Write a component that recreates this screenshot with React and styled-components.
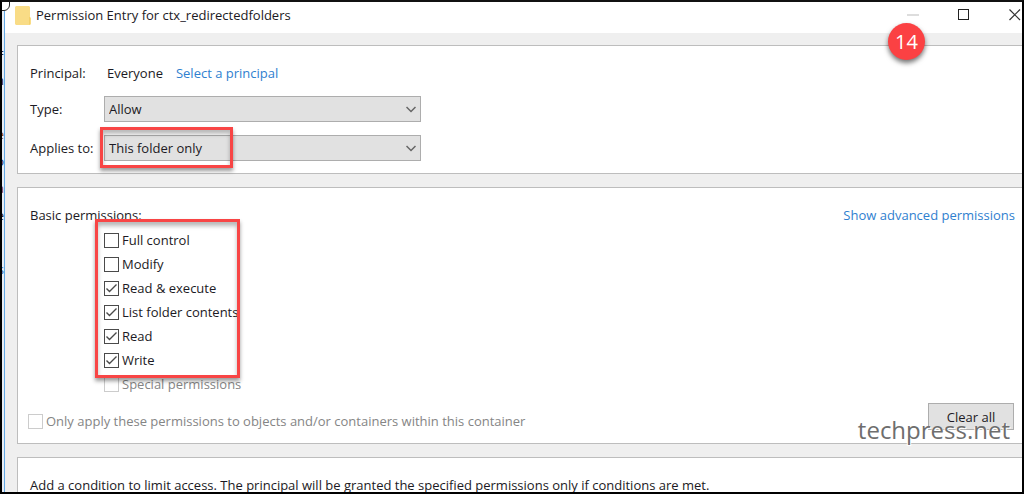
import React from 'react';
import styled, { createGlobalStyle, css } from 'styled-components';

const GlobalStyle = createGlobalStyle`
  * {
    box-sizing: border-box;
  }

  body {
    margin: 0;
    background: #fff;
    color: #1c1a24;
    font-family: 'Open Sans', 'Noto Sans', sans-serif;
    font-size: 13px;
    line-height: 20px;
  }

  input, select, button {
    margin: 0;
    color: inherit;
    font: inherit;
  }
`;

const Frame = styled.div`
  position: relative;
  display: flex;
  height: 100vh;
  overflow: hidden;
  border: 2px solid #000;
  border-top-color: #111;
`;

const CornerHandle = styled.span`
  position: absolute;
  top: -8px;
  left: -8px;
  width: 16px;
  height: 17px;
  border: 1px solid #222;
  border-radius: 6px;
  background: #fff;
`;

const Behind = styled.div`
  flex: none;
  display: flex;
  flex-direction: column;
  align-items: flex-end;
  width: 2px;
  padding-top: 38px;
  overflow: hidden;
  background: #e8eef5;
  color: #223;
  line-height: 27px;
`;

const BehindLine = styled.span`
  height: 27px;
  color: ${({ $color }) => $color};
`;

const Window = styled.div`
  flex: 1;
  min-width: 0;
  border-left: 1px solid #62a8e5;
  background: #efefef;
`;

const TitleBar = styled.header`
  display: flex;
  align-items: center;
  height: 31px;
  padding: 0 1px 5px 10px;
  background: #fff;
`;

const Title = styled.h1`
  flex: 1;
  margin: 0 0 0 5px;
  font-size: 13px;
  font-weight: 400;
`;

const WindowButtons = styled.div`
  display: flex;
  gap: 39px;
`;

const WindowButton = styled.button`
  display: flex;
  padding: 0;
  border: 0;
  background: none;
`;

const Body = styled.main`
  display: flex;
  flex-direction: column;
  gap: 13px;
  padding: 12px 0 0 12px;
`;

const Panel = styled.section`
  padding: 17px 7px 12px 12px;
  border: 1px solid #bdbdbd;
  border-right: 0;
  background: #fff;
`;

const Fields = styled.div`
  display: grid;
  grid-template-columns: 74px minmax(0, 317px);
  gap: 13px 0;
  align-items: center;
`;

const Principal = styled.div`
  display: flex;
  gap: 13px;
  padding-left: 3px;
`;

const Link = styled.a`
  color: #2f80cf;
  text-decoration: none;
  white-space: nowrap;
`;

const SelectBox = styled.div`
  position: relative;
  display: grid;
  align-items: center;

  > * {
    grid-area: 1 / 1;
  }

  > svg {
    justify-self: end;
    margin-right: 5px;
    pointer-events: none;
  }
`;

const Select = styled.select`
  appearance: none;
  width: 100%;
  height: 26px;
  padding: 0 24px 0 4px;
  border: 1px solid #adadad;
  border-radius: 0;
  background: #e1e1e1;
`;

const Highlight = styled.span`
  position: absolute;
  border: 3px solid #f84545;
  box-shadow: 0 3px 4px rgba(0, 0, 0, 0.4), inset 0 4px 4px rgba(0, 0, 0, 0.28);
  pointer-events: none;

  ${({ $around }) => $around === 'value' && css`
    top: -8px;
    left: -4px;
    width: 133px;
    height: 41px;
  `}

  ${({ $around }) => $around === 'list' && css`
    top: -9px;
    left: -9px;
    width: 145px;
    height: 159px;
  `}
`;

const PanelHead = styled.div`
  display: flex;
  justify-content: space-between;
`;

const Heading = styled.h2`
  margin: 0;
  font-size: 13px;
  font-weight: 400;
`;

const PermissionList = styled.div`
  position: relative;
  width: fit-content;
  margin: 3px 0 7px 74px;
`;

const CheckLabel = styled.label`
  display: flex;
  align-items: center;
  gap: 3px;
  height: 24px;
  color: ${({ $disabled }) => ($disabled ? '#858585' : 'inherit')};
  white-space: nowrap;
`;

const CheckBox = styled.span`
  display: grid;

  > * {
    grid-area: 1 / 1;
  }

  > svg {
    pointer-events: none;
  }
`;

const CheckInput = styled.input`
  appearance: none;
  width: 15px;
  height: 15px;
  border: 1px solid #4a4a4a;
  background: #fff;

  &:disabled {
    border-color: #ccc;
  }
`;

const PanelFoot = styled.div`
  display: flex;
  align-items: flex-start;
  justify-content: space-between;
  margin-left: -2px;

  ${CheckLabel} {
    height: 20px;
    margin-top: 8px;
  }
`;

const Button = styled.button`
  width: 86px;
  height: 27px;
  margin-right: 1px;
  padding: 0;
  border: 1px solid #adadad;
  background: #e1e1e1;
`;

const Condition = styled.p`
  margin: 0;
`;

const StepBadge = styled.span`
  position: absolute;
  top: 21px;
  right: 97px;
  display: flex;
  align-items: center;
  justify-content: center;
  width: 37px;
  height: 37px;
  border-radius: 50%;
  background: #fb4143;
  box-shadow: 0 3px 5px rgba(0, 0, 0, 0.55);
  color: #fff;
  font-size: 20px;
`;

const Watermark = styled.span`
  position: absolute;
  right: 12px;
  bottom: 46px;
  color: #6e6e6e;
  font-size: 24px;
  line-height: 32px;
  text-shadow: -1px 1px 1px #fff, 1px 1px 0 #fff;
`;

const permissions = [
  { name: 'Full control' },
  { name: 'Modify' },
  { name: 'Read & execute', checked: true },
  { name: 'List folder contents', checked: true },
  { name: 'Read', checked: true },
  { name: 'Write', checked: true },
  { name: 'Special permissions', disabled: true },
];

const behindLines = [
  { text: '=', color: '#223' },
  { text: 'n', color: '#223' },
  { text: '', color: '#223' },
  { text: 'e', color: '#8a4a20' },
  { text: 'o', color: '#103070' },
  { text: 'a', color: '#7a3a30' },
  { text: 'e', color: '#223' },
  { text: '', color: '#223' },
  { text: 's', color: '#1560b0' },
];

const FolderIcon = () => (
  <svg width="16" height="19" viewBox="0 0 16 19" aria-hidden="true">
    <path d="M1 0H14L15 1V11L16 12V18L15 19H1L0 18V1Z" fill="#f9dc86" />
    <path d="M14.5 11V18.5" stroke="#f3d06b" />
  </svg>
);

const Chevron = () => (
  <svg width="10" height="7" viewBox="0 0 10 7" fill="none" aria-hidden="true">
    <path d="M0.5 1L5 5.5L9.5 1" stroke="#666" strokeWidth="1.5" />
  </svg>
);

const Dropdown = ({ id, options, children }) => (
  <SelectBox>
    <Select id={id}>
      {options.map((option) => (
        <option key={option}>{option}</option>
      ))}
    </Select>
    <Chevron />
    {children}
  </SelectBox>
);

const Check = ({ label, checked, disabled }) => {
  const [on, setOn] = React.useState(Boolean(checked));

  return (
    <CheckLabel $disabled={disabled}>
      <CheckBox>
        <CheckInput
          type="checkbox"
          checked={on}
          disabled={disabled}
          onChange={() => setOn(!on)}
        />
        {on && (
          <svg width="15" height="15" viewBox="0 0 15 15" fill="none" aria-hidden="true">
            <path d="M2.5 7.5L5.5 10.5L12.5 3.5" stroke="#4a4a4a" strokeWidth="1.4" />
          </svg>
        )}
      </CheckBox>
      {label}
    </CheckLabel>
  );
};

const App = () => {
  return (
    <>
      <GlobalStyle />
      <Frame>
        <Behind aria-hidden="true">
          {behindLines.map((line, i) => (
            <BehindLine key={i} $color={line.color}>{line.text}</BehindLine>
          ))}
        </Behind>
        <Window>
          <TitleBar>
            <FolderIcon />
            <Title>Permission Entry for ctx_redirectedfolders</Title>
            <WindowButtons>
              <WindowButton aria-label="Minimize" disabled>
                <svg width="12" height="12" viewBox="0 0 12 12">
                  <path d="M0 6H12" stroke="#ddd" strokeWidth="2" />
                </svg>
              </WindowButton>
              <WindowButton aria-label="Maximize">
                <svg width="12" height="12" viewBox="0 0 12 12" fill="none">
                  <rect x="0.5" y="0.5" width="10" height="10" stroke="#222" />
                </svg>
              </WindowButton>
              <WindowButton aria-label="Close">
                <svg width="12" height="12" viewBox="0 0 12 12" fill="none">
                  <path d="M0.5 0.5L11 11M11 0.5L0.5 11" stroke="#333" strokeWidth="1.2" />
                </svg>
              </WindowButton>
            </WindowButtons>
          </TitleBar>
          <Body>
            <Panel>
              <Fields>
                <span>Principal:</span>
                <Principal>
                  <span>Everyone</span>
                  <Link href="#principal">Select a principal</Link>
                </Principal>
                <label htmlFor="type">Type:</label>
                <Dropdown id="type" options={['Allow', 'Deny']} />
                <label htmlFor="applies">Applies to:</label>
                <Dropdown id="applies" options={['This folder only']}>
                  <Highlight $around="value" />
                </Dropdown>
              </Fields>
            </Panel>
            <Panel>
              <PanelHead>
                <Heading>Basic permissions:</Heading>
                <Link href="#advanced">Show advanced permissions</Link>
              </PanelHead>
              <PermissionList>
                {permissions.map((item) => (
                  <Check
                    key={item.name}
                    label={item.name}
                    checked={item.checked}
                    disabled={item.disabled}
                  />
                ))}
                <Highlight $around="list" />
              </PermissionList>
              <PanelFoot>
                <Check
                  label="Only apply these permissions to objects and/or containers within this container"
                  disabled
                />
                <Button type="button">Clear all</Button>
              </PanelFoot>
            </Panel>
            <Panel>
              <Condition>
                Add a condition to limit access. The principal will be granted the specified permissions only if conditions are met.
              </Condition>
            </Panel>
          </Body>
        </Window>
        <CornerHandle />
        <StepBadge>14</StepBadge>
        <Watermark>techpress.net</Watermark>
      </Frame>
    </>
  );
};

export default App;
